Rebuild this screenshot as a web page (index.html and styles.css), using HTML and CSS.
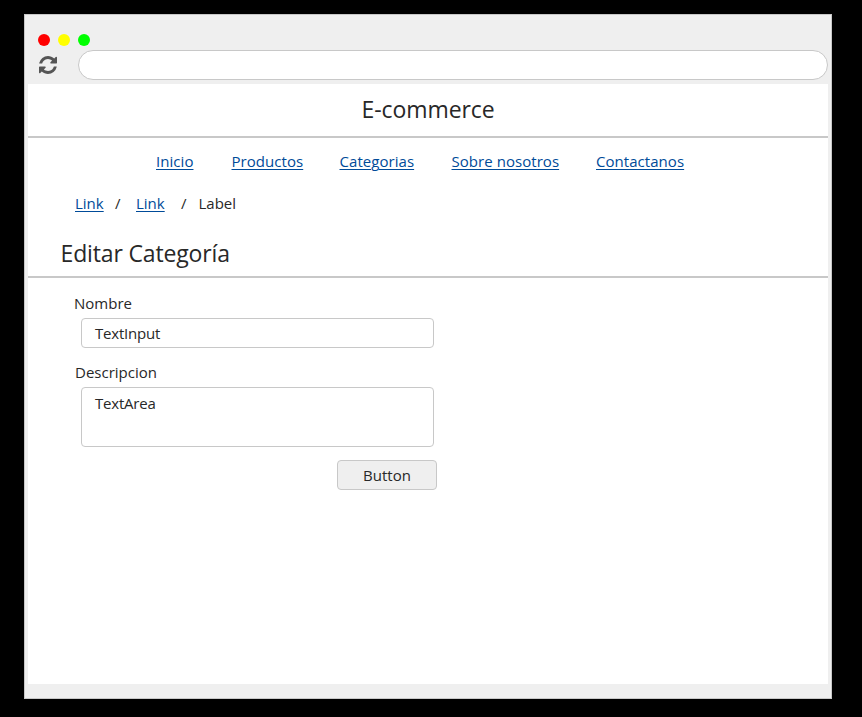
FILE: index.html
```html
<!DOCTYPE html>
<html lang="es">
<head>
<meta charset="utf-8">
<title>E-commerce</title>
<link rel="stylesheet" href="styles.css">
</head>
<body>
<div class="window">
  <div class="chrome">
    <div class="dots"><span class="dot red"></span><span class="dot yellow"></span><span class="dot green"></span></div>
    <div class="toolbar">
      <svg class="refresh" viewBox="0 0 1536 1536" aria-hidden="true"><path d="M1511 928q0 5-1 7-64 268-268 434.500T764 1536q-146 0-282.500-55T238 1324l-129 129q-19 19-45 19t-45-19-19-45V960q0-26 19-45t45-19h448q26 0 45 19t19 45-19 45l-137 137q71 66 161 102t187 36q134 0 250-65t186-179q11-17 53-117 8-23 30-23h192q13 0 22.500 9.500t9.500 22.500zm25-800v448q0 26-19 45t-45 19h-448q-26 0-45-19t-19-45 19-45l138-138Q969 256 768 256q-134 0-250 65T332 500q-11 17-53 117-8 23-30 23H50q-13 0-22.500-9.500T18 608v-7q65-268 270-434.500T768 0q146 0 284 55.500T1297 212l130-129q19-19 45-19t45 19 19 45z"/></svg>
      <div class="address"></div>
    </div>
  </div>
  <main class="page">
    <header class="brand"><span>E-commerce</span></header>
    <nav class="nav">
      <a class="inicio" href="#">Inicio</a>
      <a class="productos" href="#">Productos</a>
      <a class="categorias" href="#">Categorias</a>
      <a class="nosotros" href="#">Sobre nosotros</a>
      <a class="contacto" href="#">Contactanos</a>
    </nav>
    <div class="crumbs"><a href="#">Link</a><span>/</span><a href="#">Link</a><span>/</span><span class="current">Label</span></div>
    <h1 class="title"><span>Editar Categoría</span></h1>
    <div class="form">
      <div class="label name">Nombre</div>
      <div class="field">TextInput</div>
      <div class="label desc">Descripcion</div>
      <div class="field area">TextArea</div>
      <div class="button">Button</div>
    </div>
  </main>
</div>
</body>
</html>
```
FILE: styles.css
```css
* { box-sizing: border-box; }
body {
  margin: 0;
  height: 717px;
  padding: 14px 0 0 24px;
  overflow: hidden;
  background: #000;
  color: #282828;
  font: 15px/20px "Segoe UI", "Open Sans", sans-serif;
}
.window {
  width: 808px;
  height: 685px;
  padding: 0 3px;
  border: 1px solid #c8c8c8;
  background: #efefef;
}
.chrome { height: 69px; padding-top: 19px; }
.dots { display: flex; gap: 8px; padding-left: 10px; }
.dot { width: 12px; height: 12px; border-radius: 50%; }
.red { background: #f00; }
.yellow { background: #ff0; }
.green { background: #0f0; }
.toolbar { display: flex; align-items: center; margin-top: 4px; padding-left: 11px; }
.refresh { width: 18px; height: 18px; fill: #555; }
.address {
  width: 750px;
  height: 30px;
  margin-left: 21px;
  border: 1px solid #c8c8c8;
  border-radius: 15px;
  background: #fff;
}
.page { height: 600px; background: #fff; }
.brand {
  height: 54px;
  padding: 9px 0 0 333.5px;
  border-bottom: 2px solid #c8c8c8;
  font-size: 23px;
  line-height: 32px;
  letter-spacing: -0.08px;
}
a { color: #004b99; text-decoration: underline; text-underline-offset: 2px; text-decoration-thickness: 1px; }
.nav {
  display: grid;
  grid-template-columns: 75.5px 108px 112px 144.5px 100px;
  padding: 13px 0 0 128px;
  white-space: nowrap;
  letter-spacing: 0.05px;
}
.crumbs {
  display: grid;
  grid-template-columns: 40px 21px 45px 17.5px 60px;
  padding: 22px 0 0 47px;
}
.title {
  height: 65px;
  margin: 0;
  padding: 24px 0 0 32.5px;
  border-bottom: 2px solid #c8c8c8;
  font-size: 23px;
  font-weight: 400;
  line-height: 32px;
  letter-spacing: -0.15px;
}
.form { width: 409px; padding: 15px 0 0 46px; }
.field {
  width: 353px;
  height: 30px;
  margin: 5px 0 0 7px;
  padding: 4px 13px;
  border: 1px solid #c8c8c8;
  border-radius: 4px;
  letter-spacing: -0.2px;
}
.desc { margin-top: 14px; padding-left: 1px; }
.area { height: 60px; padding-top: 5px; }
.button {
  width: 100px;
  height: 30px;
  margin: 13px 0 0 263px;
  border: 1px solid #c8c8c8;
  border-radius: 4px;
  background: #efefef;
  line-height: 29px;
  text-align: center;
}
```
